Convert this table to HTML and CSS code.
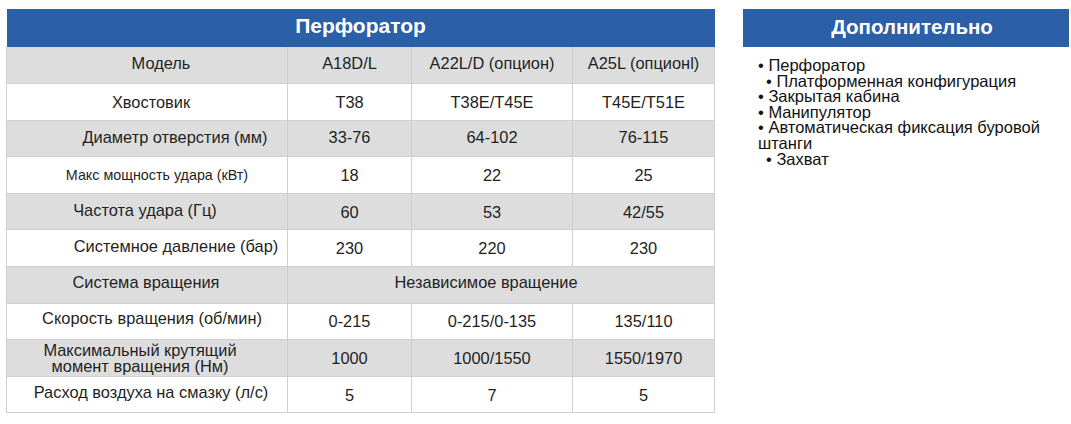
FILE: index.html
```html
<!DOCTYPE html>
<html lang="ru">
<head>
<meta charset="utf-8">
<title>Перфоратор</title>
<link rel="stylesheet" href="styles.css">
</head>
<body>
<div class="page">
  <table class="spec">
    <colgroup>
      <col class="c1"><col class="c2"><col class="c3"><col class="c4">
    </colgroup>
    <thead>
      <tr><th colspan="4" class="title">Перфоратор</th></tr>
    </thead>
    <tbody>
      <tr class="gray r1"><td class="label">Модель</td><td>A18D/L</td><td>A22L/D (опцион)</td><td>A25L (опционl)</td></tr>
      <tr class="r2"><td class="label">Хвостовик</td><td>T38</td><td>T38E/T45E</td><td>T45E/T51E</td></tr>
      <tr class="gray r3"><td class="label">Диаметр отверстия (мм)</td><td>33-76</td><td>64-102</td><td>76-115</td></tr>
      <tr class="r4"><td class="label small">Макс мощность удара (кВт)</td><td>18</td><td>22</td><td>25</td></tr>
      <tr class="gray r5"><td class="label">Частота удара (Гц)</td><td>60</td><td>53</td><td>42/55</td></tr>
      <tr class="r6"><td class="label">Системное давление (бар)</td><td>230</td><td>220</td><td>230</td></tr>
      <tr class="gray r7"><td class="label">Система вращения</td><td colspan="3" class="wide">Независимое вращение</td></tr>
      <tr class="r8"><td class="label">Скорость вращения (об/мин)</td><td>0-215</td><td>0-215/0-135</td><td>135/110</td></tr>
      <tr class="gray r9"><td class="label two">Максимальный крутящий<br>момент вращения (Нм)</td><td>1000</td><td>1000/1550</td><td>1550/1970</td></tr>
      <tr class="r10"><td class="label">Расход воздуха на смазку (л/с)</td><td>5</td><td>7</td><td>5</td></tr>
    </tbody>
  </table>
  <section class="extra">
    <h2 class="extra-title">Дополнительно</h2>
    <div class="extra-list">
      <div>• Перфоратор</div>
      <div class="indent">• Платформенная конфигурация</div>
      <div>• Закрытая кабина</div>
      <div>• Манипулятор</div>
      <div>• Автоматическая фиксация буровой<br>штанги</div>
      <div class="indent">• Захват</div>
    </div>
  </section>
</div>
</body>
</html>
```

FILE: styles.css
```css
html, body {
  margin: 0;
  padding: 0;
  background: #ffffff;
}
body {
  font-family: "Liberation Sans", Arial, sans-serif;
  color: #1f1f1f;
}
.page {
  display: flex;
  align-items: flex-start;
  gap: 28px;
  padding: 9px 0 0 6px;
}
.spec {
  width: 708px;
  border-collapse: collapse;
  table-layout: fixed;
  font-size: 16.4px;
}
.spec col.c1 { width: 281px; }
.spec col.c2 { width: 124px; }
.spec col.c3 { width: 161px; }
.spec col.c4 { width: 142px; }
.spec th.title {
  box-sizing: border-box;
  background: #2b5fa7;
  color: #ffffff;
  font-size: 21px;
  font-weight: bold;
  height: 38px;
  padding: 0 0 4px 0;
  text-align: center;
  border: none;
}
.spec td {
  box-sizing: border-box;
  height: 36.6px;
  padding: 0;
  line-height: 18px;
  text-align: center;
  vertical-align: middle;
  border: 1px solid #cfcfcf;
  background: #ffffff;
  white-space: nowrap;
}
.spec tr.gray td {
  background: #dddddd;
}
.spec tbody tr:first-child td { border-top: none; }
.spec td.small { font-size: 14.3px; }
.spec td.two { line-height: 16px; }

.r1 td { padding-bottom: 4px; }
.r1 td.label { padding-left: 28px; }
.r2 td.label { padding-left: 8px; }
.r3 td { padding-bottom: 3px; }
.r3 td.label { padding-left: 56px; }
.r4 td.label { padding-left: 20px; }
.r5 td.label { padding-right: 4px; padding-bottom: 4px; }
.r6 td.label { padding-left: 58px; padding-bottom: 4px; }
.r7 td { padding-bottom: 6px; }
.r7 td.label { padding-right: 2px; }
.r7 td.wide { padding-right: 30px; }
.r8 td.label { padding-left: 10px; padding-bottom: 6px; }
.r9 td.label { padding-right: 14px; }
.r10 td.label { padding-left: 8px; padding-bottom: 6px; }

.extra {
  width: 326px;
}
.extra-title {
  margin: 0;
  height: 38px;
  line-height: 36px;
  background: #2b5fa7;
  color: #ffffff;
  font-size: 20.5px;
  font-weight: bold;
  text-align: center;
  padding-left: 12px;
  box-sizing: border-box;
}
.extra-list {
  padding: 11px 0 0 15px;
  font-size: 16.5px;
  line-height: 15.6px;
  color: #111111;
}
.extra-list .indent {
  padding-left: 8px;
}
```
